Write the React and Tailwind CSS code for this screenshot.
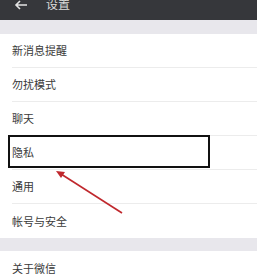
export default function App() {
  const rows1 = ["新消息提醒", "勿扰模式", "聊天", "隐私", "通用", "帐号与安全"];
  return (
    <div className="relative w-[257px] h-[274px] overflow-hidden bg-white" style={{ fontFamily: '"Noto Sans CJK SC", "Noto Sans", sans-serif' }}>
      <div className="h-[20px] bg-[#36373b] flex items-start overflow-hidden">
        <svg className="ml-[14px] mt-[0px]" width="14" height="10" viewBox="0 0 14 10">
          <path d="M13 5H2M6 1L2 5l4 4" stroke="#e4e4e4" strokeWidth="1.6" fill="none" />
        </svg>
        <span className="ml-[18px] -mt-[2px] text-[12px] leading-[12px] text-[#dcdcdc]">设置</span>
      </div>
      <div className="h-[14px] bg-[#e8e7ec]" />
      <div className="flex flex-col">
        {rows1.map((t, i) => (
          <div key={t} className="h-[34px] flex flex-col">
            <div className="flex-1 flex items-center pl-[12px] text-[11px] text-[#3a3a3a]">{t}</div>
            {i < rows1.length - 1 && <div className="ml-[12px] h-px bg-[#ececec]" />}
          </div>
        ))}
      </div>
      <div className="h-[13px] bg-[#e8e7ec]" />
      <div className="h-[34px] flex items-center pl-[12px] text-[11px] text-[#3a3a3a]">关于微信</div>
      <div className="absolute left-[8px] top-[135px] w-[202px] h-[33px] border-2 border-[#111]" />
      <svg className="absolute left-0 top-0" width="257" height="274">
        <line x1="122" y1="213" x2="61" y2="174" stroke="#c0282d" strokeWidth="1.6" />
        <path d="M56 171 L65 172 L61 178 Z" fill="#c0282d" />
      </svg>
    </div>
  );
}
